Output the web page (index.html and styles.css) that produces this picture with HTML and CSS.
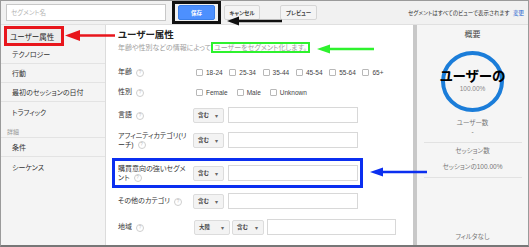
FILE: index.html
```html
<!DOCTYPE html>
<html lang="ja">
<head>
  <meta charset="UTF-8" />
  <title>セグメント編集</title>
  <link rel="stylesheet" href="styles.css">
</head>
<body>
  <div class="frame">

    <div class="topbar">
      <div class="seg-name">セグメント名</div>
      <span class="hl-black"><button class="btn btn-blue">保存</button></span>
      <button class="btn">キャンセル</button>
      <button class="btn btn-preview">プレビュー</button>
      <div class="top-note">セグメントはすべてのビューで表示されます <a class="link">変更</a></div>
    </div>

    <div class="body">
      <div class="sidebar">
        <div class="item active"><span class="mark">ユーザー属性</span></div>
        <div class="item">テクノロジー</div>
        <div class="item">行動</div>
        <div class="item">最初のセッションの日付</div>
        <div class="item last">トラフィック</div>
        <div class="group">詳細</div>
        <div class="item">条件</div>
        <div class="item last">シーケンス</div>
      </div>

      <div class="content">
        <div class="title">ユーザー属性</div>
        <div class="subtitle">年齢や性別などの情報によって<span class="hl-green">ユーザーをセグメント化します。</span></div>

        <div class="row row-age">
          <div class="label">年齢 <span class="help">?</span></div>
          <div class="checks">
            <span class="check"><i class="box"></i>18-24</span>
            <span class="check"><i class="box"></i>25-34</span>
            <span class="check"><i class="box"></i>35-44</span>
            <span class="check"><i class="box"></i>45-54</span>
            <span class="check"><i class="box"></i>55-64</span>
            <span class="check"><i class="box"></i>65+</span>
          </div>
        </div>

        <div class="row row-gender">
          <div class="label">性別 <span class="help">?</span></div>
          <div class="checks gender">
            <span class="check"><i class="box"></i>Female</span>
            <span class="check"><i class="box"></i>Male</span>
            <span class="check"><i class="box"></i>Unknown</span>
          </div>
        </div>

        <div class="row row-lang">
          <div class="label">言語 <span class="help">?</span></div>
          <div class="select">含む <span class="caret">▾</span></div>
          <div class="field"></div>
        </div>

        <div class="row row-tall">
          <div class="label">アフィニティカテゴリ(リ<br>ーチ) <span class="help">?</span></div>
          <div class="select">含む <span class="caret">▾</span></div>
          <div class="field"></div>
        </div>

        <div class="row row-blue">
          <div class="label">購買意向の強いセグメ<br>ント <span class="help">?</span></div>
          <div class="select">含む <span class="caret">▾</span></div>
          <div class="field"></div>
        </div>

        <div class="row row-tall">
          <div class="label">その他のカテゴリ <span class="help">?</span></div>
          <div class="select">含む <span class="caret">▾</span></div>
          <div class="field"></div>
        </div>

        <div class="row row-tall">
          <div class="label">地域 <span class="help">?</span></div>
          <div class="select select-wide">大陸 <span class="caret">▾</span></div>
          <div class="select select-second">含む <span class="caret">▾</span></div>
          <div class="field field-wide"></div>
        </div>
      </div>

      <div class="scrollbar"></div>

      <div class="summary">
        <div class="sum-title">概要</div>
        <div class="ring">
          <div class="ring-name">ユーザーの</div>
          <div class="ring-pct">100.00%</div>
        </div>
        <div class="stat">
          <div>ユーザー数</div>
          <div>-</div>
        </div>
        <div class="stat stat-lined">
          <div>セッション数</div>
          <div>-</div>
          <div>セッションの100.00%</div>
        </div>
        <div class="sum-foot">フィルタなし</div>
      </div>
    </div>

    <!-- annotation arrows -->
    <svg class="arrows" width="529" height="247" viewBox="0 0 529 247">
      <line x1="78" y1="35.5" x2="115" y2="35.5" stroke="#e8161c" stroke-width="2.5" />
      <polygon points="65,35.5 80,30 80,41" fill="#e8161c" />
      <line x1="236" y1="21" x2="282" y2="21" stroke="#111" stroke-width="2.6" />
      <polygon points="227,21 239,16.5 239,25.5" fill="#111" />
      <line x1="327" y1="49" x2="374" y2="49" stroke="#2ef22e" stroke-width="2.6" />
      <polygon points="317,49 330,44.5 330,53.5" fill="#2ef22e" />
      <line x1="380" y1="172" x2="427" y2="172" stroke="#0b2ff0" stroke-width="2.4" />
      <polygon points="370,172 383,167.5 383,176.5" fill="#0b2ff0" />
    </svg>
  </div>
</body>
</html>
```

FILE: styles.css
```css
body {
  margin: 0;
  font-family: "Liberation Sans", "Noto Sans CJK JP", sans-serif;
  font-feature-settings: "palt";
  color: #333;
}

.frame {
  position: relative;
  width: 529px;
  height: 247px;
  box-sizing: border-box;
  border: 1px solid #9a9a9a;
  border-bottom: 2px solid #777;
  display: flex;
  flex-direction: column;
  overflow: hidden;
  background: #fff;
}

/* top bar */
.topbar {
  height: 24px;
  flex: none;
  box-sizing: border-box;
  background: #f1f1f1;
  border-bottom: 1px solid #e0e0e0;
  display: flex;
  align-items: center;
  padding: 0 4px 0 5px;
}

.seg-name {
  width: 160px;
  height: 17px;
  box-sizing: border-box;
  background: #fff;
  border: 1px solid #c8c8c8;
  color: #b4b4b4;
  font-size: 6.5px;
  line-height: 15px;
  padding-left: 4px;
}

.hl-black {
  display: flex;
  align-items: center;
  margin-left: 6px;
  height: 23px;
  box-sizing: border-box;
  border: 3px solid #111;
  padding: 0 3px;
}

.btn {
  height: 15px;
  width: 36px;
  padding: 0;
  margin-left: 3px;
  background: #f4f4f4;
  border: 1px solid #d6d6d6;
  border-radius: 2px;
  color: #444;
  font-family: inherit;
  font-feature-settings: "palt";
  font-size: 5.5px;
  font-weight: bold;
}

.hl-black .btn { margin-left: 0; width: 37px; }

.btn-blue {
  background: #4d90fe;
  border-color: #3b7fe8;
  color: #fff;
}

.btn-preview { margin-left: 20px; width: 37px; }

.top-note {
  margin-left: auto;
  font-size: 5.5px;
  color: #333;
}

.link { color: #1a5fd0; margin-left: 2px; }

/* main area */
.body {
  flex: 1;
  display: flex;
  min-height: 0;
}

.sidebar {
  width: 104px;
  flex: none;
  background: #f4f4f4;
  border-right: 1px solid #dcdcdc;
  padding-top: 1px;
}

.item {
  height: 19px;
  box-sizing: border-box;
  border-bottom: 1px solid #e3e3e3;
  display: flex;
  align-items: center;
  padding-left: 11px;
  font-size: 7px;
  color: #333;
}

.item.last { border-bottom: none; }

.item.active {
  padding-left: 3px;
  border-bottom: none;
  align-items: flex-start;
}

.mark {
  height: 20px;
  box-sizing: border-box;
  display: flex;
  align-items: center;
  border: 3px solid #e8161c;
  background: #ececec;
  padding: 0 7px 0 3px;
  font-size: 7.5px;
  color: #222;
}

.group {
  height: 17px;
  box-sizing: border-box;
  padding: 5px 0 0 6px;
  display: flex;
  align-items: center;
  border-bottom: 1px solid #e3e3e3;
  font-size: 6px;
  color: #999;
}

.content {
  flex: 1;
  padding: 4px 0 0 12px;
  min-width: 0;
}

.title {
  font-size: 9.5px;
  font-weight: bold;
  line-height: 12px;
  color: #222;
}

.subtitle {
  font-size: 7px;
  line-height: 14px;
  color: #a0a0a0;
}

.hl-green {
  border: 2px solid #2ef22e;
  padding: 0 1px;
}

.row {
  display: flex;
  align-items: center;
  height: 20px;
}

.row-age { margin-top: 7px; }
.row-lang { margin-top: 1px; height: 24px; }
.row-tall { height: 26px; }

.row-blue {
  margin: 5px 0 0 -6px;
  height: 30px;
  width: 251px;
  box-sizing: border-box;
  border: 3px solid #0b2ff0;
  padding-left: 3px;
}

.label {
  width: 75px;
  flex: none;
  font-size: 7px;
  line-height: 9px;
  color: #333;
}

.help {
  display: inline-block;
  width: 6px;
  height: 6px;
  margin-left: 2px;
  border: 1px solid #cfcfcf;
  border-radius: 50%;
  font-size: 4.5px;
  line-height: 6px;
  text-align: center;
  color: #bbb;
  vertical-align: middle;
}

.checks {
  display: flex;
  padding-left: 3px;
  font-size: 6.5px;
  color: #444;
}

.check {
  width: 33.3px;
  display: flex;
  align-items: center;
}

.gender .check { width: auto; margin-right: 9px; }

.box {
  width: 5px;
  height: 5px;
  margin-right: 3px;
  border: 1px solid #b8b8b8;
  border-radius: 1px;
  background: #fff;
}

.select {
  width: 31px;
  height: 15px;
  flex: none;
  box-sizing: border-box;
  display: flex;
  align-items: center;
  justify-content: space-between;
  padding: 0 5px 0 4px;
  background: #f3f3f3;
  border: 1px solid #dcdcdc;
  border-radius: 2px;
  font-size: 5.5px;
  font-weight: bold;
  color: #444;
}

.caret { font-size: 6px; color: #666; font-weight: normal; }

.select-wide { width: 36px; margin-left: 1px; }
.select-second { width: 32px; margin-left: 2px; }

.field {
  width: 130px;
  height: 16px;
  flex: none;
  box-sizing: border-box;
  margin-left: 4px;
  background: #fff;
  border: 1px solid #d8d8d8;
}

.field-wide { width: 129px; margin-left: 3px; }

.scrollbar {
  width: 4px;
  flex: none;
  background: #c8c8c8;
}

/* right summary */
.summary {
  width: 111px;
  flex: none;
  background: #f5f5f5;
  display: flex;
  flex-direction: column;
  align-items: center;
  padding-top: 4px;
  font-size: 6.5px;
  color: #777;
  text-align: center;
}

.sum-title {
  font-size: 8px;
  line-height: 12px;
  color: #444;
}

.ring {
  margin-top: 10px;
  width: 63px;
  height: 61px;
  box-sizing: border-box;
  border: 4px solid #1b7dd9;
  border-radius: 50%;
  display: flex;
  flex-direction: column;
  align-items: center;
  justify-content: center;
}

.ring-name {
  font-size: 13.5px;
  font-weight: bold;
  line-height: 14px;
  color: #000;
  white-space: nowrap;
}

.ring-pct {
  font-size: 6.5px;
  line-height: 10px;
  color: #888;
}

.stat {
  width: 98px;
  margin-top: 6px;
  padding-bottom: 6px;
  line-height: 9px;
  border-bottom: 1px solid #e2e2e2;
}

.stat-lined {
  margin-top: 0;
  padding-top: 4px;
  line-height: 8px;
}

.sum-foot {
  margin-top: auto;
  padding-bottom: 4px;
  line-height: 9px;
}

.arrows {
  position: absolute;
  top: -1px;
  left: -1px;
  pointer-events: none;
}
```
